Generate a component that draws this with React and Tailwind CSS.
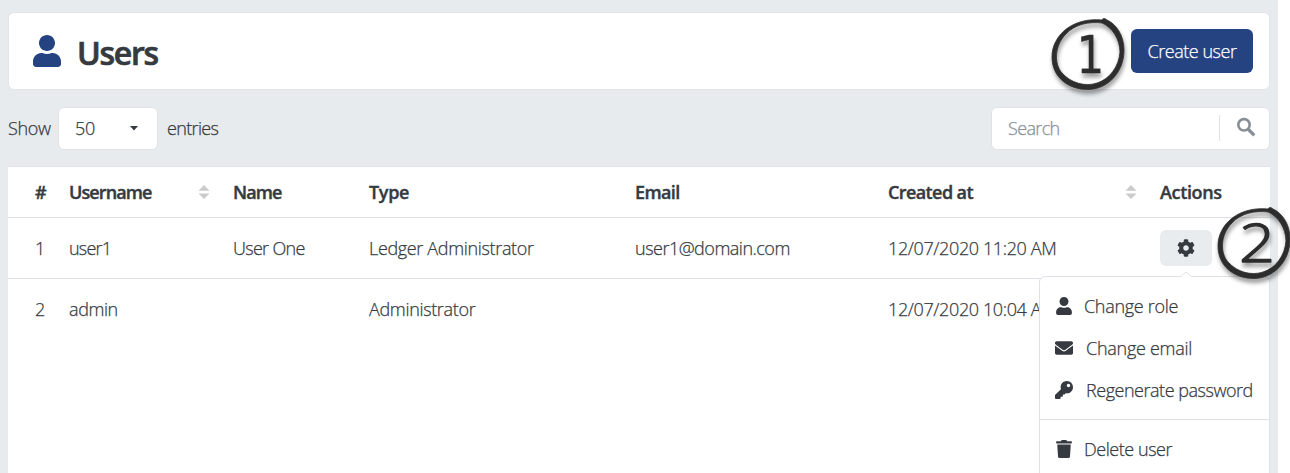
import { FaUser, FaEnvelope, FaKey, FaTrash, FaCog } from "react-icons/fa";

const COLS = "grid grid-cols-[61px_164px_136px_266px_253px_272px_110px] items-center";

function Sort() {
  return (
    <svg width="12" height="14" viewBox="0 0 12 14" className="fill-[#cbcbcb]">
      <path d="M6 0 11.5 5.8H.5ZM.5 8.4h11L6 14Z" />
    </svg>
  );
}

function SearchIcon() {
  return (
    <svg width="20" height="20" viewBox="0 0 20 20" className="mr-[13px] mb-[3px] ml-4" fill="none" stroke="#868e96">
      <circle cx="8" cy="7.800" r="5.700" strokeWidth="2.600" />
      <path d="m12 12 6.300 6.300" strokeWidth="3.200" />
    </svg>
  );
}

function Marker({ digit, x, y, stretch, family, size, weight, stroke }) {
  return (
    <svg width="84" height="90" viewBox="0 0 84 90" className="overflow-visible tracking-normal drop-shadow-[1px_4px_2px_rgba(0,0,0,0.4)]">
      <path
        fillRule="evenodd"
        fill="#2d2d2d"
        stroke="#2d2d2d"
        strokeWidth="0.8"
        strokeLinejoin="round"
        d="M57 10C58 8 60 8 62 10C71 14 79 25 79 40C79 63 62 79.500 43 79.500C23 79.500 7 67 7 47C7 25 28 7 57 10ZM57 13C45 11.500 30 14 21 24C9 36 9 54 17 63C26 73 40 77 52 73C65 69 74 56 75 42C75 29 67 17 57 13Z"
      />
      <text
        transform={`translate(${x} ${y}) scale(${stretch} 1)`}
        textAnchor="middle"
        fontFamily={family}
        fontSize={size}
        fontWeight={weight}
        fill="#2d2d2d"
        stroke="#2d2d2d"
        strokeWidth={stroke}
        strokeLinejoin="round"
        className="[-webkit-text-stroke:initial]"
      >
        {digit}
      </text>
    </svg>
  );
}

function MenuItem({ icon: Icon, label, gap, tracking }) {
  return (
    <div className="flex h-[42px] items-center pl-[15px]">
      <Icon className="size-[18px] text-[#343a40]" />
      <span className={`${gap} ${tracking}`}>{label}</span>
    </div>
  );
}

export default function App() {
  return (
    <div className="relative h-[473px] w-[1290px] overflow-hidden bg-white font-['Open_Sans',sans-serif] text-lg leading-6 font-light tracking-[-0.34px] whitespace-nowrap text-[#343a40] [-webkit-text-stroke:0.25px]">
      <div className="flex h-full w-[1278px] flex-col bg-[#e7ebee] pt-3 pr-2 pl-2">
        <header className="flex h-[78px] items-center justify-between rounded-md border border-[#e1e4e8] bg-white pr-4 pl-[22px]">
          <div className="flex items-center">
            <FaUser className="size-8" color="#254380" />
            <h1 className="pt-1 pl-[14px] text-[32px] leading-10 font-semibold tracking-[-1.25px] [-webkit-text-stroke:0.7px]">Users</h1>
          </div>
          <button className="h-11 w-[122px] rounded-md bg-[#254380] font-light tracking-[-0.48px] text-white">Create user</button>
        </header>

        <div className="mt-4 flex h-11 items-center justify-between">
          <div className="flex items-center">
            <span className="w-[42px]">Show</span>
            <div className="ml-2 flex h-[43px] w-[100px] items-center justify-between rounded-md border border-[#dfe2e6] bg-white pr-[19px] pl-4">
              <span>50</span>
              <svg width="8" height="5" viewBox="0 0 8 5" className="fill-[#343a40]"><path d="M0 0h8L4 4.5Z" /></svg>
            </div>
            <span className="pl-[9px] tracking-[-0.65px]">entries</span>
          </div>
          <div className="flex h-[43px] w-[279px] items-center rounded-md border border-[#dfe2e6] bg-white pl-4 text-[#868e96]">
            <span className="flex-1 tracking-[-0.65px]">Search</span>
            <div className="h-[26px] w-px bg-[#dee2e6]" />
            <SearchIcon />
          </div>
        </div>

        <main className="mt-4 w-[1262px] flex-1 bg-white">
          <div className={`${COLS} h-[52px] border-y border-[#dee2e6] font-semibold tracking-[-0.9px] [-webkit-text-stroke:0.4px]`}>
            <span className="pl-[27px]">#</span>
            <span className="flex items-center justify-between pr-[23px]">Username <Sort /></span>
            <span>Name</span>
            <span className="tracking-[-0.3px]">Type</span>
            <span className="tracking-[-0.6px]">Email</span>
            <span className="flex items-center justify-between pr-[23px] tracking-[-0.6px]">Created at <Sort /></span>
            <span className="tracking-[-0.35px]">Actions</span>
          </div>
          <div className={`${COLS} h-[61px] border-b border-[#dee2e6]`}>
            <span className="pl-[27px]">1</span>
            <span className="tracking-[-0.8px]">user1</span>
            <span className="tracking-[-0.7px]">User One</span>
            <span>Ledger Administrator</span>
            <span className="tracking-[-0.5px]">user1@domain.com</span>
            <span className="tracking-[-0.38px]">12/07/2020 11:20 AM</span>
            <span className="flex h-9 w-[52px] items-center justify-center rounded-md bg-[#e9ecef]"><FaCog className="size-[18px]" /></span>
          </div>
          <div className={`${COLS} h-[60px]`}>
            <span className="pl-[27px]">2</span>
            <span className="tracking-[-0.4px]">admin</span>
            <span />
            <span>Administrator</span>
            <span />
            <span className="tracking-[-0.38px]">12/07/2020 10:04 AM</span>
            <span />
          </div>
        </main>
      </div>

      <div className="absolute top-[276px] left-[1039px] h-[220px] w-[231px] rounded-md border border-[#dee2e6] bg-white pt-2">
        <svg width="12" height="7" viewBox="0 0 12 7" className="absolute -top-[6px] left-[140px]"><path d="M0 6 6 1l6 5v1H0Z" fill="white" /><path d="M0 6 6 1l6 5" fill="none" stroke="#dee2e6" /></svg>
        <MenuItem icon={FaUser} label="Change role" gap="pl-[11px]" tracking="tracking-[-0.3px]" />
        <MenuItem icon={FaEnvelope} label="Change email" gap="pl-[13px]" tracking="tracking-[-0.27px]" />
        <MenuItem icon={FaKey} label="Regenerate password" gap="pl-[13px]" tracking="tracking-[-0.47px]" />
        <div className="my-2 h-px bg-[#dee2e6]" />
        <MenuItem icon={FaTrash} label="Delete user" gap="pl-[11px]" tracking="tracking-[-0.45px]" />
      </div>

      <div className="absolute top-[10px] left-[1045px]"><Marker digit="1" x={45.5} y={62.5} stretch={0.84} family="DejaVu Sans" size={52} weight={400} stroke={0.3} /></div>
      <div className="absolute top-[199px] left-[1211px]"><Marker digit="2" x={46} y={62.5} stretch={1.17} family="Open Sans" size={54} weight={300} stroke={1.3} /></div>
    </div>
  );
}
